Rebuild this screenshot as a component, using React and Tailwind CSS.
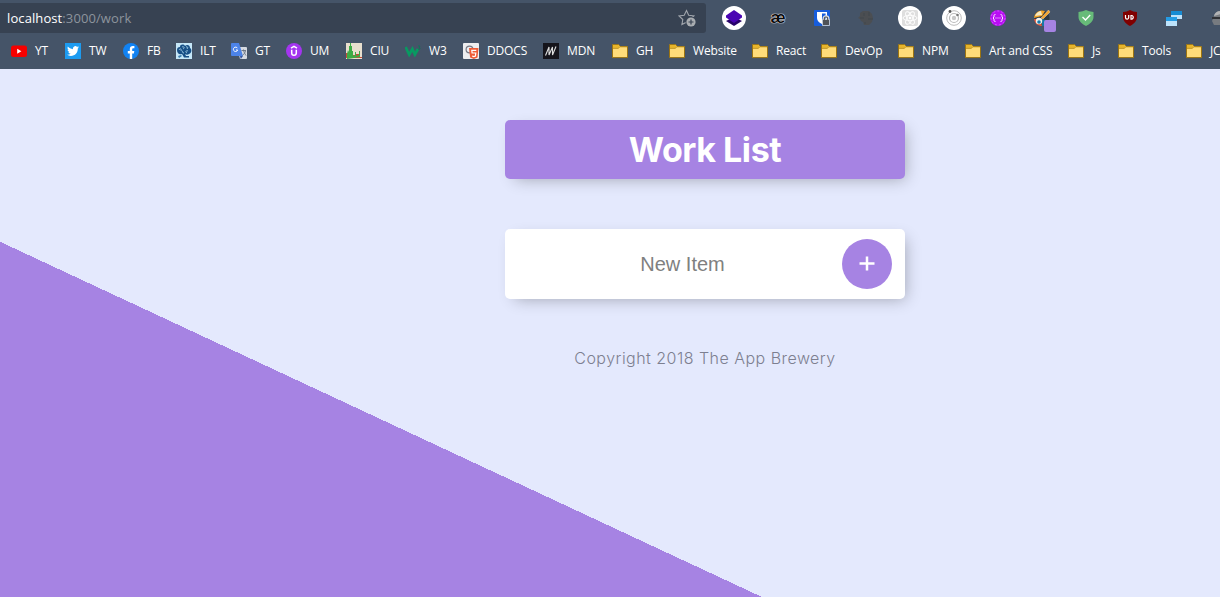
import React from "react";

const Svg = ({ size = 16, box = 16, children }) => (
  <svg width={size} height={size} viewBox={`0 0 ${box} ${box}`} className="block shrink-0">
    {children}
  </svg>
);

const YouTube = () => (
  <Svg>
    <rect x="0" y="2.500" width="16" height="11.500" rx="2.500" fill="#f60000" />
    <path d="M6.200 5.700v5l4.200-2.500z" fill="#fff" />
  </Svg>
);
const Twitter = () => (
  <Svg>
    <rect width="16" height="16" fill="#1d9bf0" />
    <g transform="translate(2 2) scale(.5)">
      <path
        fill="#fff"
        d="M23.950 4.570a10 10 0 0 1-2.820.770 4.960 4.960 0 0 0 2.160-2.720c-.950.550-2 .950-3.130 1.180a4.920 4.920 0 0 0-8.380 4.480C7.690 8.100 4.070 6.130 1.640 3.160a4.900 4.900 0 0 0 1.520 6.570 4.900 4.900 0 0 1-2.230-.610v.060a4.920 4.920 0 0 0 3.950 4.830 5 5 0 0 1-2.210.080 4.940 4.940 0 0 0 4.600 3.420A9.870 9.870 0 0 1 0 19.540a14 14 0 0 0 7.550 2.210c9.050 0 14-7.500 14-13.980v-.640a9.940 9.940 0 0 0 2.400-2.560z"
      />
    </g>
  </Svg>
);
const Facebook = () => (
  <Svg>
    <circle cx="8" cy="8" r="8" fill="#1182f2" />
    <path d="M6.800 16v-5.600H4.800V8h2V6.300c0-2.100 1.200-3.200 3-3.200.8 0 1.600.1 1.600.1v2h-1c-.9 0-1.200.5-1.200 1.200V8h2.100l-.4 2.400H9.200V16z" fill="#fff" />
  </Svg>
);
const Ilt = () => (
  <Svg>
    <rect width="16" height="16" fill="#c5e7f8" />
    <path d="M1 7c0-2 1-3 3-3 0-3 4-3 5-1 2-2 5-1 5 2 2 1 2 5-1 6-1 1-3 1-4 0l1 2h3v1.500H8L6 11c-3 1-5-1-5-4z" fill="#174f86" />
    <path d="M3 7c1-2 3-1 2 1M6 4c2-1 3 1 1 2m3-2c2-1 2 1 1 2m1 2c-2-1-3 1-1 2M7 8c-1 0-1 2 1 2" fill="none" stroke="#b5dff2" strokeWidth=".8" />
    <path d="m2 13 3-1 1 1-3 2z" fill="#397bad" />
  </Svg>
);
const Translate = () => (
  <Svg>
    <path d="M6 4h9q1 0 1 1v10q0 1-1 1H9z" fill="#d6dae1" />
    <path d="M1 0h7l4 13H1q-1 0-1-1V1q0-1 1-1z" fill="#4c83e8" />
    <path d="M9 13h3l-2.200 3z" fill="#3456a0" />
    <path d="M6.500 5.200A2.200 2.200 0 1 0 6.700 7H5" fill="none" stroke="#fff" strokeWidth="1" />
    <path d="M10.500 7.500H15M12.500 6.500v1c1 3 2 4 2.500 5m-.5-4.500c-.5 2-2 3.500-3 4.500" fill="none" stroke="#66717f" strokeWidth=".9" />
  </Svg>
);
const Udemy = () => (
  <Svg>
    <circle cx="8" cy="8" r="8" fill="#a435f0" />
    <path d="M5 5.200 8 3.400l3 1.800M5.700 6.800V10a2.300 2.300 0 0 0 4.600 0V6.800" fill="none" stroke="#fff" strokeWidth="1.500" />
  </Svg>
);
const CanIUse = () => (
  <Svg>
    <rect width="16" height="16" fill="#e8dfce" />
    <path d="M0 10h5v2h5v-1h3v3h3v1H0z" fill="#c64c38" />
    <path d="M1 16v-5l1-4 1 2V3h1V0h1v3h1v5h1v5l2-1V9h1v4l3-1V8h1v6l-6 1z" fill="#3dac45" />
  </Svg>
);
const W3 = () => (
  <Svg>
    <path d="M.6 4 4.200 11.500 7.400 6l2.500 5.500L13 6" fill="none" stroke="#089a61" strokeWidth="2.700" />
    <path d="M13 3h2l-1 1.500c1 0 1.300.7 1 1.300s-1.500.7-2 .2" fill="none" stroke="#087b57" strokeWidth=".8" />
  </Svg>
);
const DevDocs = () => (
  <Svg>
    <rect width="16" height="16" rx="1" fill="#eeeef0" />
    <circle cx="6.500" cy="6.500" r="3.400" fill="none" stroke="#777985" strokeWidth="1.200" />
    <path d="M6 5h9.500l-1 9.500L10.800 16l-3.700-1.500z" fill="#ee5b35" />
    <path d="M13.300 7.300H8.800l.3 2.700h3.700l-.4 3-1.600.6-1.700-.6" fill="none" stroke="#fff" strokeWidth="1.200" />
  </Svg>
);
const Mdn = () => (
  <Svg>
    <rect width="16" height="16" fill="#15141b" />
    <path d="M2.500 12.500 6 4v8L9.500 4v8L13 3.500" fill="none" stroke="#ddd" strokeWidth="1.100" />
  </Svg>
);
const Folder = () => (
  <Svg>
    <path d="M.5 1.600h6.200l1.500 2h7.300v11H.5z" fill="#ffdc79" stroke="#9c7411" />
    <path d="M1 2.100h5.500l1.200 1.600-1.200 1.600H1z" fill="#e7b52c" />
    <path d="M1 5.400h5.400l1.500-1.700H15" fill="none" stroke="#b78b1c" strokeWidth=".8" />
  </Svg>
);

const bookmarks = [
  [YouTube, "YT", "w-[54px]"],
  [Twitter, "TW", "w-[58px]"],
  [Facebook, "FB", "w-[53px]"],
  [Ilt, "ILT", "w-[55px]"],
  [Translate, "GT", "w-[55px]"],
  [Udemy, "UM", "w-[60px]"],
  [CanIUse, "CIU", "w-[59px]"],
  [W3, "W3", "w-[58px]"],
  [DevDocs, "DDOCS", "w-[80px]"],
  [Mdn, "MDN", "w-[69px]"],
  [Folder, "GH", "w-[57px]"],
  [Folder, "Website", "w-[83px]"],
  [Folder, "React", "w-[69px]"],
  [Folder, "DevOp", "w-[77px]"],
  [Folder, "NPM", "w-[67px]"],
  [Folder, "Art and CSS", "w-[103px]"],
  [Folder, "Js", "w-[50px]"],
  [Folder, "Tools", "w-[68px]"],
  [Folder, "JC", "w-[60px]"],
];

const Layers = () => (
  <Svg size={24} box={24}>
    <circle cx="12" cy="12" r="12" fill="#fff" />
    <path d="m4 15 8-4 8 4-8 5z" fill="#280368" />
    <path d="m4 9.500 8-5.500 8 5.500v2L12 17l-8-5.500z" fill="#4a06b3" />
  </Svg>
);
const Ae = () => (
  <span className="-mt-0.5 font-['Liberation_Sans',sans-serif] text-[17px] leading-none font-bold text-[#0b0b0e] [text-shadow:0_0_1px_#fff,0_0_1px_#fff,0_0_1px_#fff]">
    æ
  </span>
);
const Bitwarden = () => (
  <Svg>
    <rect width="16" height="16" rx="1" fill="#175ddc" />
    <path d="M3 2h10v6c0 3-2.500 5-5 6-2.500-1-5-3-5-6z" fill="#fff" />
    <path d="M8 3.500h3.600V8c0 2-1.800 3.500-3.600 4.400z" fill="#175ddc" />
    <path d="M9.700 10V8.700a2.300 2.300 0 0 1 4.600 0V10" fill="none" stroke="#d6dae0" strokeWidth="2.400" />
    <path d="M8.500 9.500h7v6h-7z" fill="#4e5257" stroke="#d6dae0" strokeWidth=".8" />
    <path d="M10.300 10V8.700a1.700 1.700 0 0 1 3.400 0V10" fill="none" stroke="#4e5257" strokeWidth="1.100" />
  </Svg>
);
const DarkBadge = () => (
  <Svg>
    <path d="M2 3 5 1h6l3 3 1 4-1 4-3 3H6l-1-3-2-1-1-2-2-1 2-2z" fill="#4b4e52" />
    <path d="M2 8h4m0-5v3m5-4v4m-1 3h5m-8 3v2" stroke="#41464d" strokeWidth="1" />
  </Svg>
);
const ReactTools = () => (
  <Svg size={24} box={24}>
    <circle cx="12" cy="12" r="12" fill="#fff" />
    <rect x="4" y="4" width="16" height="16" rx="2" fill="#dedede" />
    <g fill="none" stroke="#fff" strokeWidth=".9">
      <ellipse cx="12" cy="12" rx="7" ry="2.700" />
      <ellipse cx="12" cy="12" rx="7" ry="2.700" transform="rotate(60 12 12)" />
      <ellipse cx="12" cy="12" rx="7" ry="2.700" transform="rotate(120 12 12)" />
    </g>
    <circle cx="12" cy="12" r="1.300" fill="#fff" />
  </Svg>
);
const Orbit = () => (
  <Svg size={24} box={24}>
    <circle cx="12" cy="12" r="12" fill="#fff" />
    <circle cx="12" cy="12" r="7.300" fill="none" stroke="#aaa" strokeWidth=".8" />
    <circle cx="12" cy="12" r="4.500" fill="none" stroke="#bbb" strokeWidth="1.200" />
    <circle cx="12" cy="12" r="2.200" fill="#c9c9c9" />
    <circle cx="8" cy="5.500" r="1.400" fill="#555" />
    <circle cx="15.500" cy="9" r="1.300" fill="#777" />
  </Svg>
);
const GraphQl = () => (
  <Svg>
    <circle cx="8" cy="8" r="8" fill="#b90df5" />
    <path d="M5.500 4.500Q4 4.500 4 5.500v1.500L3 8l1 1v1.500q0 1 1.500 1m5-7Q12 4.500 12 5.500v1.500L13 8l-1 1v1.500q0 1-1.500 1" fill="none" stroke="#fff" strokeWidth=".9" />
    <path d="M5.500 8h1m1 0h1m1 0h1" stroke="#fff" strokeWidth="1.200" />
    <circle cx="8" cy="8" r="7" fill="none" stroke="#e6a6fb" strokeWidth=".5" strokeDasharray="2 2" />
  </Svg>
);
const ColorPicker = () => (
  <div className="mt-[6px] ml-[6px]">
    <Svg size={22} box={22}>
      <circle cx="8" cy="8" r="7.500" fill="#303944" />
      <path d="M0 8a8 8 0 0 1 11-7L8 6z" fill="#f5a525" />
      <path d="M1 6a8 8 0 0 1 6-5l1 4z" fill="#f4e9c4" />
      <path d="m8 9 7 2c-1 3-3 5-7 5z" fill="#1579a5" />
      <path d="M0 9h6l2 7c-4 0-7-2-8-7z" fill="#e3593b" />
      <circle cx="5" cy="11" r="3.200" fill="#f2f2ec" />
      <circle cx="5" cy="12" r="1.800" fill="#147aad" />
      <path d="m7 8 7.500-8L16 2 9 9z" fill="#f7a72d" stroke="#f8d39c" strokeWidth=".5" />
      <rect x="10" y="10" width="12" height="12" rx="2" fill="#a683e3" />
    </Svg>
  </div>
);
const AdGuard = () => (
  <Svg>
    <path d="M.5 2Q5 1.500 8 0q3 1.500 7.500 2v5c0 4-4 7.500-7.500 9C4.500 14.500.5 11 .5 7z" fill="#67bb79" />
    <path d="m4.500 7 3 3 4.700-5" fill="none" stroke="#fff" strokeWidth="1.400" />
  </Svg>
);
const UBlock = () => (
  <Svg>
    <path d="M1 2q4 0 7-2 3 2 7 2v5c0 4-3 7-7 9-4-2-7-5-7-9z" fill="#800000" />
    <path d="M3.500 5v2.500a1.600 1.600 0 0 0 3.200 0V5M9 5.500h1a1.900 1.900 0 0 1 0 3.600H9z" fill="none" stroke="#fff" strokeWidth="1.200" />
  </Svg>
);
const Windows = () => (
  <Svg>
    <path d="M5 1h11v8H5z" fill="#bde1fa" />
    <path d="M5 1h11v4H5z" fill="#168bd3" />
    <path d="M0 7h11v9H0z" fill="#bde3fb" />
    <path d="M0 7h11v4H0z" fill="#259ce4" />
  </Svg>
);
const Robot = () => (
  <div className="ml-1">
    <Svg>
      <path d="M2 6c1-4 4-5 7-5s6 2 6 6v8H2l-2-4z" fill="#777b80" />
      <path d="M2 6c1-4 4-5 7-5v3z" fill="#b3b4b5" />
      <path d="M0 7h16v2H0z" fill="#303236" />
    </Svg>
  </div>
);

const extensions = [Layers, Ae, Bitwarden, DarkBadge, ReactTools, Orbit, GraphQl, ColorPicker, AdGuard, UBlock, Windows, Robot];

function BrowserBar() {
  return (
    <header className="h-[69px] shrink-0 bg-[#455468] pt-[3px] font-['Open_Sans','Noto_Sans',sans-serif]">
      <div className="flex h-[30px]">
        <div className="flex w-[706px] shrink-0 items-center justify-between rounded-r-[3px] bg-[#374252] pr-[10px] pl-[7px]">
          <div className="text-[13px] leading-none tracking-[0.1px] whitespace-nowrap text-[#8d949d]">
            <span className="text-white">localhost</span>:3000/work
          </div>
          <svg width="18" height="18" viewBox="0 0 18 18">
            <path d="m8.500 1.500 2.200 4.700 5.200.7-3.800 3.600.9 5.100-4.500-2.400-4.600 2.400.9-5.100L1 6.900l5.200-.7z" fill="none" stroke="#a0a5ac" strokeWidth="1.100" />
            <circle cx="13" cy="13" r="5.500" fill="#374252" />
            <circle cx="13" cy="13" r="4.600" fill="#a9adb1" />
            <path d="M13 10.500v5M10.500 13h5" stroke="#374252" strokeWidth="1.200" />
          </svg>
        </div>
        <div className="flex min-w-0 flex-1 items-center overflow-hidden pl-[6px]">
          {extensions.map((Icon, i) => (
            <div key={i} className="flex h-[30px] w-[44px] shrink-0 items-center justify-center">
              <Icon />
            </div>
          ))}
        </div>
      </div>
      <nav className="flex h-[36px] items-center overflow-hidden pl-[11px]">
        {bookmarks.map(([Icon, label, width]) => (
          <div key={label} className={`flex shrink-0 items-center gap-2 ${width}`}>
            <Icon />
            <span className="text-[12px] leading-4 tracking-[-0.15px] whitespace-nowrap text-white">{label}</span>
          </div>
        ))}
      </nav>
    </header>
  );
}

export default function App() {
  return (
    <div className="flex h-[597px] w-[1220px] flex-col overflow-hidden">
      <BrowserBar />
      <main className="flex flex-1 flex-col items-center bg-[linear-gradient(25deg,#a683e3_322px,#e4e9fd_322px)] pt-[51px] pr-[30px] pl-[220px] font-['Inter',sans-serif]">
        <h1 className="flex h-[59px] w-[400px] items-center justify-center rounded-[5px] bg-[#a683e3] text-[34px] font-bold tracking-[-0.45px] text-white shadow-[5px_5px_15px_-5px_rgba(0,0,0,0.3)]">
          Work List
        </h1>
        <form className="mt-[50px] flex h-[70px] w-[400px] items-center rounded-[5px] bg-white shadow-[5px_5px_15px_-5px_rgba(0,0,0,0.3)]">
          <input
            className="ml-[18px] h-[60px] w-[319px] bg-transparent text-center font-['Liberation_Sans',sans-serif] text-[20px] outline-none placeholder:text-[#808080]"
            placeholder="New Item"
          />
          <button type="button" className="flex size-[50px] items-center justify-center rounded-full bg-[#a683e3]" aria-label="Add item">
            <svg width="16" height="16" viewBox="0 0 16 16">
              <path d="M8 .5v14M.5 7.500h15" stroke="#fff" strokeWidth="2.500" />
            </svg>
          </button>
        </form>
        <footer className="mt-[47px] text-[16px] leading-6 font-light tracking-[0.47px] whitespace-nowrap text-[#7d7f90]">
          Copyright 2018 The App Brewery
        </footer>
      </main>
    </div>
  );
}
